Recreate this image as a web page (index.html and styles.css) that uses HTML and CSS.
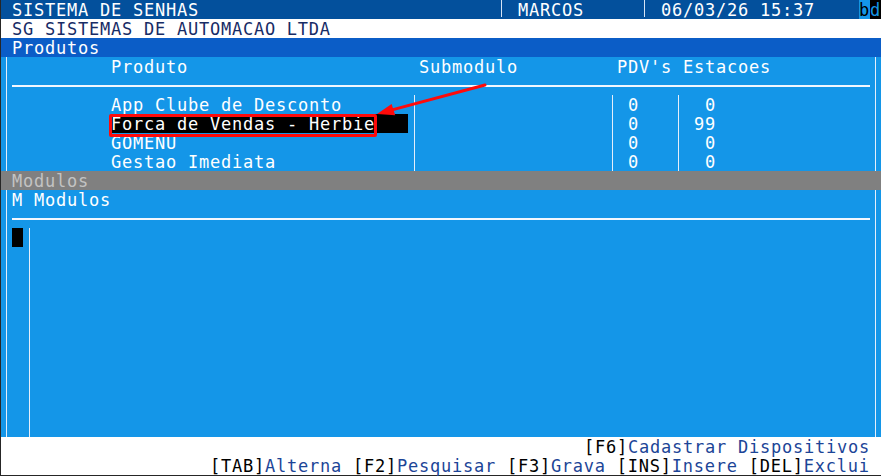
FILE: index.html
```html
<!DOCTYPE html>
<html lang="pt">
<head>
<meta charset="utf-8">
<title>Sistema de Senhas</title>
<link rel="stylesheet" href="styles.css">
</head>
<body>
<div class="screen">
  <div class="row title">
    <span class="t c1">SISTEMA DE SENHAS</span>
    <span class="sep c45"></span>
    <span class="t c47">MARCOS</span>
    <span class="sep c58"></span>
    <span class="t c60">06/03/26 15:37</span>
    <span class="t c78 bd-b">b</span>
    <span class="t c79 bd-d">d</span>
  </div>
  <div class="row company">
    <span class="t c1">SG SISTEMAS DE AUTOMACAO LTDA</span>
  </div>
  <div class="row section">
    <span class="t c1">Produtos</span>
  </div>

  <div class="panel panel-top">
    <span class="t c10 r1">Produto</span>
    <span class="t c38 r1">Submodulo</span>
    <span class="t c56 r1">PDV's Estacoes</span>
    <span class="hline r2"></span>

    <span class="t c10 r3">App Clube de Desconto</span>
    <span class="t sel r4">Forca de Vendas - Herbie<span class="mark"></span></span>
    <span class="t c10 r5">GOMENU</span>
    <span class="t c10 r6">Gestao Imediata</span>

    <span class="vl c37 rows-table"></span>
    <span class="vl c55 rows-table"></span>
    <span class="vl c61 rows-table"></span>

    <span class="t c57 r3">0</span><span class="t c64 r3">0</span>
    <span class="t c57 r4">0</span><span class="t c63 r4">99</span>
    <span class="t c57 r5">0</span><span class="t c64 r5">0</span>
    <span class="t c57 r6">0</span><span class="t c64 r6">0</span>

    <svg class="arrow" width="122" height="40" viewBox="0 0 122 40">
      <line x1="116" y1="5" x2="24" y2="29.6" stroke="#ff0a0a" stroke-width="3" stroke-linecap="round"/>
      <polygon points="8,34 26.2,35.3 22.6,23.9" fill="#ff0a0a"/>
    </svg>
  </div>

  <div class="row modbar">
    <span class="t c1">Modulos</span>
  </div>

  <div class="panel panel-bottom">
    <span class="t c1 r1">M Modulos</span>
    <span class="hline r2"></span>
    <span class="cursor c1 r3"></span>
    <span class="vl c2 rows-list"></span>
  </div>

  <div class="footer">
    <div class="row">
      <span class="t c53"><span class="k">[F6]</span><span class="l">Cadastrar Dispositivos</span></span>
    </div>
    <div class="row">
      <span class="t c19"><span class="k">[TAB]</span><span class="l">Alterna </span><span class="k">[F2]</span><span class="l">Pesquisar </span><span class="k">[F3]</span><span class="l">Grava </span><span class="k">[INS]</span><span class="l">Insere </span><span class="k">[DEL]</span><span class="l">Exclui</span></span>
    </div>
  </div>
</div>
</body>
</html>
```
FILE: styles.css
```css
html, body {
  margin: 0;
  padding: 0;
  background: #262626;
  width: 881px;
  height: 476px;
  overflow: hidden;
}

.screen {
  margin-left: 1px;
  width: 880px;
  height: 476px;
  display: flex;
  flex-direction: column;
  font-family: "DejaVu Sans Mono", "Liberation Mono", monospace;
  font-size: 17px;
  letter-spacing: 0.76px;
  color: #ffffff;
}

.row {
  display: grid;
  grid-template-columns: repeat(80, 11px);
  grid-template-rows: 19px;
  height: 19px;
}

.t {
  white-space: pre;
  line-height: 20px;
  align-self: start;
}

/* column starts (0-based terminal column c -> grid line c+1) */
.c1 { grid-column-start: 2; }
.c2 { grid-column-start: 3; }
.c10 { grid-column-start: 11; }
.c19 { grid-column-start: 20; }
.c37 { grid-column-start: 38; }
.c38 { grid-column-start: 39; }
.c45 { grid-column-start: 46; }
.c47 { grid-column-start: 48; }
.c53 { grid-column-start: 54; }
.c55 { grid-column-start: 56; }
.c56 { grid-column-start: 57; }
.c57 { grid-column-start: 58; }
.c58 { grid-column-start: 59; }
.c60 { grid-column-start: 61; }
.c61 { grid-column-start: 62; }
.c63 { grid-column-start: 64; }
.c64 { grid-column-start: 65; }
.c78 { grid-column-start: 79; }
.c79 { grid-column-start: 80; }

.c1, .c2, .c10, .c19, .c37, .c38, .c45, .c47, .c53, .c55, .c56,
.c57, .c58, .c60, .c61, .c63, .c64, .c78, .c79 {
  grid-column-end: span 1;
}

/* title bar */
.title {
  background: #03509c;
}
.sep {
  grid-row: 1;
  background: linear-gradient(#d6e4f5, #d6e4f5) 5px 0 / 1px 17px no-repeat;
}
.bd-b {
  background: #1496e8;
  color: #000000;
  height: 19px;
  line-height: 20px;
}
.bd-d {
  background: #000000;
  color: #1496e8;
  height: 19px;
}

/* company row */
.company {
  background: #ffffff;
  color: #172c66;
}

/* section bar */
.section {
  background: #0b5dc7;
}

/* blue panels */
.panel {
  position: relative;
  display: grid;
  grid-template-columns: repeat(80, 11px);
  background:
    linear-gradient(#e4eefb, #e4eefb) 5px 0 / 1px 100% no-repeat,
    linear-gradient(#e4eefb, #e4eefb) 874px 0 / 1px 100% no-repeat,
    #1496e8;
}
.panel-top {
  grid-template-rows: repeat(6, 19px);
  height: 114px;
}
.panel-bottom {
  grid-template-rows: repeat(13, 19px);
  height: 247px;
}

.r1 { grid-row: 1; }
.r2 { grid-row: 2; }
.r3 { grid-row: 3; }
.r4 { grid-row: 4; }
.r5 { grid-row: 5; }
.r6 { grid-row: 6; }

.hline {
  grid-column: 2 / 80;
  height: 2px;
  margin-top: 9px;
  align-self: start;
  background: #f2f7ff;
}

.vl {
  background: linear-gradient(#e4eefb, #e4eefb) 6px 0 / 1px 100% no-repeat;
}
.rows-table { grid-row: 3 / 7; }
.rows-list { grid-row: 3 / 14; }

.sel {
  grid-column: 11 / 38;
  background: #000000;
  height: 19px;
  position: relative;
}
.mark {
  position: absolute;
  left: -2px;
  top: 0;
  width: 268px;
  height: 23px;
  box-sizing: border-box;
  border: 3px solid #ff0a0a;
  border-radius: 2px;
}

.arrow {
  position: absolute;
  left: 368px;
  top: 23px;
}

.cursor {
  background: #000000;
  height: 19px;
}

/* modulos bar */
.modbar {
  background: #808080;
  color: #c3c3c3;
}

/* footer */
.footer {
  background: #ffffff;
  display: flex;
  flex-direction: column;
}
.k {
  color: #000000;
}
.l {
  color: #1c4597;
}
```
